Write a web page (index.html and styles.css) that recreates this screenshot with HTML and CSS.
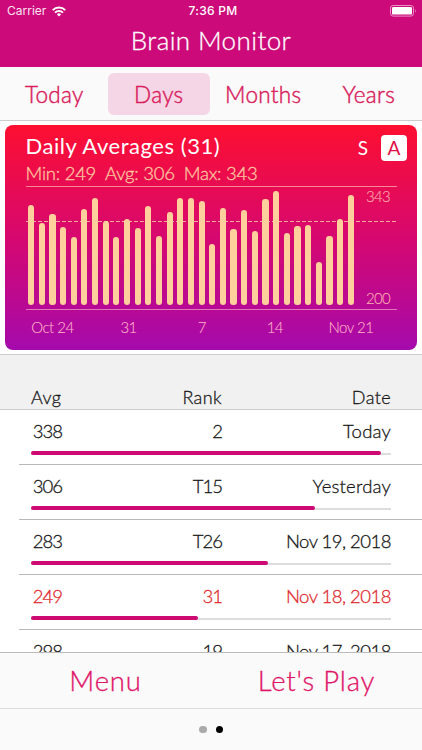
FILE: index.html
```html
<!DOCTYPE html>
<html lang="en">
<head>
<meta charset="utf-8">
<title>Brain Monitor</title>
<link rel="stylesheet" href="styles.css">
</head>
<body>
<div class="app">
  <header class="header">
    <div class="status">
      <div class="carrier"><span>Carrier</span>
        <svg width="14" height="11" viewBox="0 0 14 11" fill="none" stroke="#fff" stroke-width="1.9"><path d="M.7 4.1a9 9 0 0 1 12.6 0M3 6.6a5.7 5.7 0 0 1 8 0"/><path d="M4.9 8.4a3 3 0 0 1 4.2 0L7 10.6z" fill="#fff" stroke="none"/></svg>
      </div>
      <div class="clock">7:36 PM</div>
      <div class="battery">
        <svg width="27" height="12" viewBox="0 0 27 12"><rect x=".5" y=".5" width="23" height="10.6" rx="2.6" fill="none" stroke="#eb91c8"/><rect x="2" y="2" width="20" height="7.6" rx="1.2" fill="#fff"/><path d="M25 3.9q1.7 1.9 0 3.8z" fill="#eb91c8"/></svg>
      </div>
    </div>
    <h1 class="title">Brain Monitor</h1>
  </header>
  <nav class="tabs">
    <span class="tab">Today</span><span class="tab active">Days</span><span class="tab">Months</span><span class="tab years">Years</span>
  </nav>
  <section class="card">
    <div class="card-head">
      <h2 class="card-title">Daily Averages (31)</h2>
      <div class="modes"><span class="mode">S</span><span class="mode on">A</span></div>
    </div>
    <div class="stats"><span>Min: 249</span><span>Avg: 306</span><span>Max: 343</span></div>
    <div class="plot">
      <div class="average"></div>
      <div class="bars">
        <i style="height:100px"></i><i style="height:82px"></i><i style="height:91px"></i><i style="height:78px"></i><i style="height:68px"></i><i style="height:96px"></i><i style="height:107.5px"></i><i style="height:84px"></i><i style="height:68px"></i><i style="height:86.5px"></i><i style="height:77px"></i><i style="height:99px"></i><i style="height:69px"></i><i style="height:93px"></i><i style="height:107px"></i><i style="height:107.5px"></i><i style="height:104.5px"></i><i style="height:61px"></i><i style="height:97px"></i><i style="height:76px"></i><i style="height:95.5px"></i><i style="height:74px"></i><i style="height:106px"></i><i style="height:114px"></i><i style="height:72px"></i><i style="height:79.5px"></i><i style="height:80px"></i><i style="height:43.5px"></i><i style="height:69px"></i><i style="height:86px"></i><i style="height:110.5px"></i>
      </div>
      <div class="scale"><span>343</span><span>200</span></div>
    </div>
    <div class="axis"><span class="wide">Oct 24</span><span>31</span><span>7</span><span>14</span><span class="wide">Nov 21</span></div>
  </section>
  <main class="table">
    <div class="thead"><span>Avg</span><span>Rank</span><span>Date</span></div>
    <div class="row"><div class="cells"><span>338</span><span>2</span><span class="word">Today</span></div><div class="track"><b style="width:349.5px"></b></div></div>
    <div class="row"><div class="cells"><span>306</span><span>T15</span><span class="word">Yesterday</span></div><div class="track"><b style="width:284px"></b></div></div>
    <div class="row"><div class="cells"><span>283</span><span>T26</span><span class="date">Nov 19, 2018</span></div><div class="track"><b style="width:236.7px"></b></div></div>
    <div class="row low"><div class="cells"><span>249</span><span>31</span><span class="date">Nov 18, 2018</span></div><div class="track"><b style="width:166.7px"></b></div></div>
    <div class="row"><div class="cells"><span>298</span><span>19</span><span class="date">Nov 17, 2018</span></div></div>
  </main>
  <footer class="actions"><span class="menu">Menu</span><span class="play">Let's Play</span></footer>
  <div class="pager"><i></i><i class="current"></i></div>
</div>
</body>
</html>
```
FILE: styles.css
```css
* { box-sizing: border-box; }
body { margin: 0; background: #fff; font-family: Lato, sans-serif; font-weight: 300; -webkit-text-stroke: .3px currentColor; }
h1, h2 { margin: 0; font-weight: inherit; }
.app { width: 422px; height: 750px; display: flex; flex-direction: column; overflow: hidden; }
.app > * { flex-shrink: 0; }

.header { height: 67px; background: #cc0a7a; color: #fff; }
.status { height: 22px; display: grid; grid-template-columns: 1fr auto 1fr; align-items: center; padding: 0 5px 0 7px; font: 400 12px/22px Inter, sans-serif; -webkit-text-stroke: 0; }
.carrier { display: flex; align-items: center; gap: 6px; color: #fbe3f2; }
.clock { font-weight: 500; font-size: 12px; letter-spacing: .25px; margin-left: 2px; }
.battery { display: flex; justify-content: flex-end; }
.title { text-align: center; font-size: 26px; line-height: 36px; letter-spacing: .4px; color: #fff; }

.tabs { height: 54px; display: grid; grid-template-columns: repeat(4, 1fr); padding: 6px 2px 5px; background: #fafafa; border-bottom: 1px solid #ccc; color: #d91c5c; }
.tab { text-align: center; font-size: 22.5px; line-height: 43px; letter-spacing: .3px; margin: 0 1.5px; height: 42px; -webkit-text-stroke-width: .45px; }
.active { background: #f5d6e6; border-radius: 6px; }
.years { padding-left: 2px; }

.card { height: 225px; margin: 4px 5px 4px; padding: 9px 20px 0 20.5px; border-radius: 8px; background: linear-gradient(#fd0f30, #d60870 50%, #a50aac); color: #ffc8a0; }
.card-head { display: flex; justify-content: space-between; height: 29px; margin-right: -10px; }
.card-title { color: #fff; font-size: 22px; line-height: 24px; font-weight: 400; letter-spacing: .55px; -webkit-text-stroke: 0; }
.modes { display: flex; gap: 8px; padding-top: 1px; -webkit-text-stroke: 0; }
.mode { width: 20px; height: 26px; text-align: center; font-size: 19px; line-height: 26px; color: #fff; font-weight: 400; }
.mode.on { width: 26px; background: #fff; color: #df1245; border-radius: 4px; }
.stats { display: flex; gap: 9px; height: 23px; font-size: 18.5px; line-height: 21px; letter-spacing: -.25px; }
.plot { height: 124px; position: relative; display: flex; justify-content: space-between; border-top: 1px solid #fa8795; border-bottom: 1px solid #e077b8; }
.average { position: absolute; top: 34px; left: 0; right: 0; height: 1px; background: repeating-linear-gradient(90deg, #ffa99b 0 4px, transparent 4px 6px); }
.bars { position: relative; width: 326px; margin: 0 0 4px 2.5px; display: flex; align-items: flex-end; justify-content: space-between; }
.bars i { width: 6.2px; border-radius: 3px; background: #ffd09c; }
.scale { display: flex; flex-direction: column; justify-content: space-between; font-size: 15px; line-height: 17px; padding: 1px 7px 2px 0; color: #ffb5b0; letter-spacing: -.7px; -webkit-text-stroke: .1px; }
.axis { display: flex; justify-content: space-between; padding: 8px 23px 0 4px; font-size: 15px; line-height: 18px; color: #ffb5c8; letter-spacing: -.5px; -webkit-text-stroke: .1px; }
.axis span { width: 34px; text-align: center; }
.axis span:nth-child(2) { margin-left: -3px; }
.axis span:nth-child(4) { margin-right: -3px; }
.axis .wide { width: 46px; white-space: nowrap; }

.table { height: 298px; overflow: hidden; color: #181818; }
.thead, .cells { display: grid; }
.thead { grid-template-columns: 60px 131px 1fr; height: 56px; padding: 30px 31px 0; background: #f1f1f1; border-top: 1px solid #ccc; border-bottom: 1px solid #ccc; font-size: 18px; line-height: 24px; letter-spacing: .4px; }
.cells { grid-template-columns: 31px 160px 1fr; height: 41px; font-size: 18.5px; line-height: 43px; letter-spacing: -1px; white-space: nowrap; }
.thead span:nth-child(n+2), .cells span { text-align: right; }
.cells .word { letter-spacing: .2px; }
.cells .date { letter-spacing: -.5px; }
.row { height: 55px; margin-left: 19px; padding: 0 31px 0 12px; border-bottom: 1px solid #b8b8b8; }
.low { color: #e02b30; }
.track { height: 4px; background: linear-gradient(transparent 2.5px, #ddd 2.5px); }
.track b { display: block; height: 4px; border-radius: 2px; background: #cc0a72; }

.actions { height: 57px; border-top: 1px solid #bbb; border-bottom: 1px solid #ddd; background: #fafafa; display: grid; grid-template-columns: 1fr 1fr; text-align: center; font-size: 27.5px; line-height: 56px; color: #e01468; letter-spacing: .8px; }
.pager { flex: 1; background: #fafafa; display: flex; justify-content: center; gap: 9px; padding-top: 16.5px; }
.pager i { width: 7.5px; height: 7.5px; border-radius: 50%; background: #aaa; }
.pager .current { background: #000; }
```
